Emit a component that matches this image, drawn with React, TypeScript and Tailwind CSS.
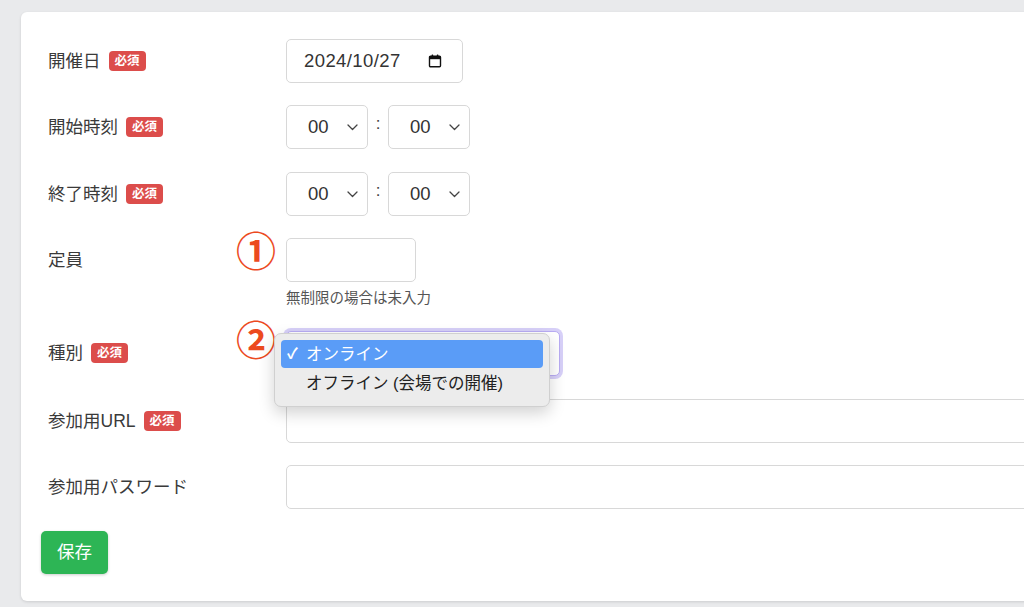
import React from "react";

const font = {
  fontFamily:
    '"Liberation Sans", "Noto Sans CJK JP", "Noto Sans", sans-serif',
};

function Badge() {
  return (
    <span className="ml-[8px] inline-flex h-[20px] items-center rounded-[4px] bg-[#dc4d4b] px-[6px] text-[12.5px] font-bold leading-none text-white">
      必須
    </span>
  );
}

function Chevron() {
  return (
    <svg width="11" height="7" viewBox="0 0 11 7" fill="none">
      <path
        d="M1 1l4.5 4.5L10 1"
        stroke="#444"
        strokeWidth="1.3"
        strokeLinecap="round"
        strokeLinejoin="round"
      />
    </svg>
  );
}

function CalendarIcon() {
  return (
    <svg width="14" height="14" viewBox="0 0 14 14" fill="none">
      <rect x="1.5" y="2.2" width="11" height="10.6" rx="1" stroke="#111" strokeWidth="1.4" />
      <rect x="1.5" y="2.2" width="11" height="3" fill="#111" />
      <rect x="3.6" y="0.5" width="1.6" height="2.6" rx="0.5" fill="#111" />
      <rect x="8.8" y="0.5" width="1.6" height="2.6" rx="0.5" fill="#111" />
    </svg>
  );
}

function TimeSelect() {
  return (
    <div className="flex h-[44px] w-[82px] items-center justify-between rounded-[5px] border border-[#d8d8d8] bg-white pl-[21px] pr-[9px] text-[18.5px] text-[#333]">
      <span>00</span>
      <Chevron />
    </div>
  );
}

function TimeRow() {
  return (
    <div className="flex items-center">
      <TimeSelect />
      <span className="flex w-[20px] justify-center pb-[6px] text-[17px] text-[#444]">:</span>
      <TimeSelect />
    </div>
  );
}

function Row({
  label,
  required,
  children,
}: {
  label: string;
  required?: boolean;
  children: React.ReactNode;
}) {
  return (
    <div className="flex">
      <div className="flex h-[44px] w-[245px] shrink-0 items-center pl-[7px] text-[17.5px] text-[#3a3a3a]">
        <span>{label}</span>
        {required && <Badge />}
      </div>
      <div className="relative flex-1">{children}</div>
    </div>
  );
}

function Marker({ n, top }: { n: string; top: number }) {
  return (
    <span
      className="absolute left-[-50px] text-[40px] font-bold leading-none text-[#ec4a1e]"
      style={{ top, fontFamily: '"Noto Sans CJK JP", sans-serif' }}
    >
      {n}
    </span>
  );
}

export default function App() {
  return (
    <div className="h-[607px] overflow-hidden bg-[#e9eaec] pl-[21px] pt-[12px]" style={font}>
      <div className="h-[589px] w-[1040px] rounded-[6px] bg-white pl-[20px] pt-[27px] shadow-[0_1px_3px_rgba(0,0,0,0.12)]">
        <div className="flex flex-col">
          <Row label="開催日" required>
            <div className="flex h-[44px] w-[177px] items-center justify-between rounded-[5px] border border-[#d8d8d8] bg-white pl-[17px] pr-[20px] text-[18.5px] tracking-[0.4px] text-[#333]">
              <span>2024/10/27</span>
              <CalendarIcon />
            </div>
          </Row>
          <div className="h-[22px]" />
          <Row label="開始時刻" required>
            <TimeRow />
          </Row>
          <div className="h-[23px]" />
          <Row label="終了時刻" required>
            <TimeRow />
          </Row>
          <div className="h-[22px]" />
          <Row label="定員">
            <Marker n="①" top={-9} />
            <div className="h-[44px] w-[130px] rounded-[5px] border border-[#d8d8d8] bg-white" />
            <div className="mt-[6px] h-[21px] text-[14.5px] leading-[21px] text-[#555]">
              無制限の場合は未入力
            </div>
          </Row>
          <div className="h-[22px]" />
          <Row label="種別" required>
            <Marker n="②" top={-13} />
            <div className="flex h-[45px] w-[274px] items-center justify-end rounded-[5px] border border-[#b9acf3] bg-white pr-[9px] shadow-[0_0_0_3px_rgba(166,150,240,0.45)]">
              <Chevron />
            </div>
            <div className="absolute left-[-12px] top-[2px] z-10 w-[276px] rounded-[7px] border border-[#d0d0d0] bg-[#ececec] px-[6px] pb-[7px] pt-[6px] text-[16.5px] shadow-[0_6px_16px_rgba(0,0,0,0.18)]">
              <div className="flex h-[28px] items-center rounded-[4px] bg-[#5a9cf7] pl-[6px] text-white">
                <span className="w-[19px] text-[15px] font-bold">✓</span>
                <span>オンライン</span>
              </div>
              <div className="flex h-[31px] items-center pl-[25px] text-[#222]">
                オフライン (会場での開催)
              </div>
            </div>
          </Row>
          <div className="h-[23px]" />
          <Row label="参加用URL" required>
            <div className="h-[44px] w-full rounded-[5px] border border-[#d8d8d8] bg-white" />
          </Row>
          <div className="h-[22px]" />
          <Row label="参加用パスワード">
            <div className="h-[44px] w-full rounded-[5px] border border-[#d8d8d8] bg-white" />
          </Row>
          <div className="h-[22px]" />
          <div>
            <button className="h-[43px] w-[67px] rounded-[5px] bg-[#2db555] text-[17.5px] text-white shadow-[0_1px_3px_rgba(0,0,0,0.2)]">
              保存
            </button>
          </div>
        </div>
      </div>
    </div>
  );
}
